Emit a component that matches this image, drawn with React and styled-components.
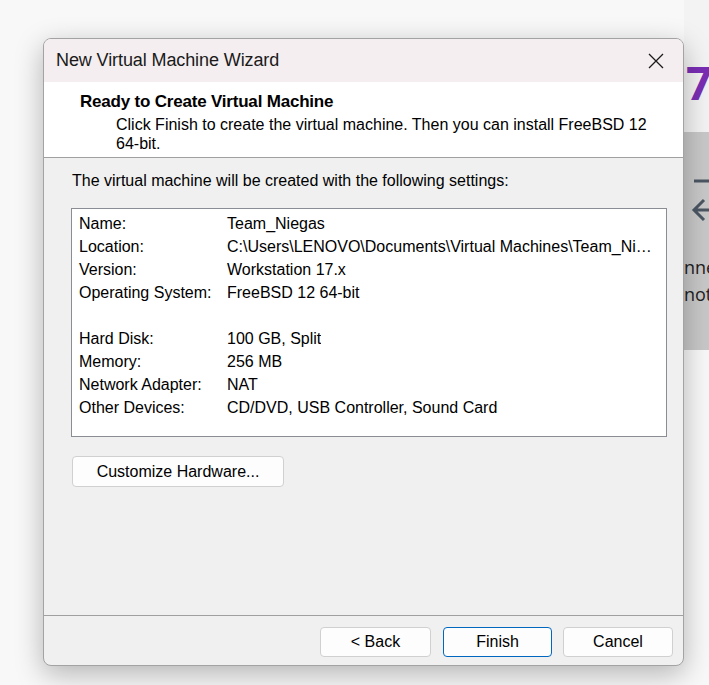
import React from 'react';
import styled, { createGlobalStyle } from 'styled-components';

const GlobalStyle = createGlobalStyle`
  body {
    margin: 0;
    background: #f8f8f8;
    font-family: 'Liberation Sans', Arial, sans-serif;
  }
`;

const Page = styled.div`
  display: flex;
  align-items: flex-start;
  height: 685px;
  padding: 38px 0 0 43px;
  box-sizing: border-box;
  overflow: hidden;
`;

const Window = styled.div`
  position: relative;
  z-index: 1;
  width: 641px;
  height: 628px;
  flex-shrink: 0;
  display: flex;
  flex-direction: column;
  box-sizing: border-box;
  border: 1px solid #a3a3a3;
  border-radius: 8px;
  overflow: hidden;
  background: #f0f0f0;
  box-shadow: 0 8px 28px rgba(0, 0, 0, 0.28);
`;

const TitleBar = styled.div`
  height: 43px;
  display: flex;
  align-items: center;
  justify-content: space-between;
  padding: 0 0 0 12px;
  background: #f4eef0;
`;

const TitleText = styled.span`
  font-size: 18px;
  color: #1a1a1a;
  letter-spacing: -0.1px;
`;

const CloseButton = styled.div`
  width: 46px;
  height: 43px;
  display: flex;
  align-items: center;
  justify-content: center;
  margin-right: 4px;
`;

const Header = styled.div`
  height: 76px;
  box-sizing: border-box;
  padding: 10px 0 0 36px;
  background: #ffffff;
  border-bottom: 1px solid #a0a0a0;
`;

const Heading = styled.div`
  font-size: 17px;
  font-weight: bold;
  color: #000;
  line-height: 20px;
  letter-spacing: -0.2px;
`;

const SubText = styled.div`
  margin: 3px 0 0 36px;
  font-size: 16px;
  line-height: 19px;
  color: #000;
  white-space: nowrap;
`;

const Body = styled.div`
  flex: 1;
  display: flex;
  flex-direction: column;
  padding: 13px 16px 0 27px;
`;

const Intro = styled.div`
  font-size: 16px;
  line-height: 19px;
  color: #000;
  margin-left: 1px;
`;

const SettingsBox = styled.div`
  margin-top: 18px;
  height: 229px;
  box-sizing: border-box;
  background: #ffffff;
  border: 1px solid #8a8d94;
  padding: 3px 0 0 7px;
  overflow: hidden;
`;

const Row = styled.div`
  display: flex;
  height: 23px;
  align-items: center;
  font-size: 16px;
  color: #000;
  margin-bottom: ${p => (p.gap ? '23px' : '0')};
`;

const Label = styled.span`
  width: 148px;
  flex-shrink: 0;
`;

const Value = styled.span`
  white-space: nowrap;
  overflow: hidden;
  text-overflow: ellipsis;
  max-width: 430px;
`;

const Button = styled.button`
  width: ${p => p.w || '110px'};
  height: ${p => p.h || '30px'};
  box-sizing: border-box;
  background: #fdfdfd;
  border: 1px solid ${p => (p.primary ? '#0067c0' : '#d0d0d0')};
  border-radius: 4px;
  font-family: 'Liberation Sans', Arial, sans-serif;
  font-size: 16px;
  color: #000;
  padding: 0;
  cursor: default;
`;

const CustomizeRow = styled.div`
  margin-top: 19px;
  margin-left: 1px;
`;

const Footer = styled.div`
  height: 50px;
  box-sizing: border-box;
  border-top: 1px solid #a0a0a0;
  display: flex;
  justify-content: flex-end;
  align-items: flex-start;
  padding: 11px 10px 0 0;
`;

const FooterGap = styled.span`
  width: ${p => p.w};
`;

const Strip = styled.div`
  width: 40px;
  flex-shrink: 0;
  margin-top: -38px;
  display: flex;
  flex-direction: column;
  overflow: hidden;
`;

const StripTop = styled.div`
  height: 132px;
  background: #f3f3f3;
  padding: 57px 0 0 2px;
  box-sizing: border-box;
`;

const BigSeven = styled.div`
  font-family: 'Open Sans', 'Liberation Sans', sans-serif;
  font-weight: bold;
  font-size: 46px;
  line-height: 50px;
  color: #7a2eb4;
`;

const StripPanel = styled.div`
  height: 218px;
  background: #c8c8c8;
  padding: 46px 0 0 6px;
  box-sizing: border-box;
`;

const PanelText = styled.div`
  font-family: 'Open Sans', 'Liberation Sans', sans-serif;
  font-size: 18px;
  line-height: 27px;
  color: #222;
  white-space: nowrap;
  margin-left: -6px;
  margin-top: ${p => p.top || '0'};
`;

const StripBottom = styled.div`
  flex: 1;
  background: #f3f3f3;
`;

const settings = [
  ['Name:', 'Team_Niegas'],
  ['Location:', 'C:\\Users\\LENOVO\\Documents\\Virtual Machines\\Team_Niegas'],
  ['Version:', 'Workstation 17.x'],
  ['Operating System:', 'FreeBSD 12 64-bit', true],
  ['Hard Disk:', '100 GB, Split'],
  ['Memory:', '256 MB'],
  ['Network Adapter:', 'NAT'],
  ['Other Devices:', 'CD/DVD, USB Controller, Sound Card'],
];

export default function App() {
  return (
    <>
      <GlobalStyle />
      <Page>
        <Window>
          <TitleBar>
            <TitleText>New Virtual Machine Wizard</TitleText>
            <CloseButton>
              <svg width="16" height="16" viewBox="0 0 16 16">
                <path d="M1 1 L15 15 M15 1 L1 15" stroke="#1a1a1a" strokeWidth="1.3" />
              </svg>
            </CloseButton>
          </TitleBar>
          <Header>
            <Heading>Ready to Create Virtual Machine</Heading>
            <SubText>
              Click Finish to create the virtual machine. Then you can install FreeBSD 12
              <br />
              64-bit.
            </SubText>
          </Header>
          <Body>
            <Intro>The virtual machine will be created with the following settings:</Intro>
            <SettingsBox>
              {settings.map(([k, v, gap]) => (
                <Row key={k} gap={gap ? 1 : 0}>
                  <Label>{k}</Label>
                  <Value>{v}</Value>
                </Row>
              ))}
            </SettingsBox>
            <CustomizeRow>
              <Button w="212px" h="31px">Customize Hardware...</Button>
            </CustomizeRow>
          </Body>
          <Footer>
            <Button w="111px">&lt; Back</Button>
            <FooterGap w="12px" />
            <Button w="109px" primary>Finish</Button>
            <FooterGap w="11px" />
            <Button w="110px">Cancel</Button>
          </Footer>
        </Window>
        <Strip>
          <StripTop>
            <BigSeven>7</BigSeven>
          </StripTop>
          <StripPanel>
            <svg width="30" height="44" viewBox="0 0 30 44">
              <path d="M4 3 H30" stroke="#4b5663" strokeWidth="3" />
              <path d="M4 32 H30 M14 22 L4 32 L14 42" stroke="#4b5663" strokeWidth="3" fill="none" />
            </svg>
            <PanelText top="28px">nne</PanelText>
            <PanelText>not</PanelText>
          </StripPanel>
          <StripBottom />
        </Strip>
      </Page>
    </>
  );
}
